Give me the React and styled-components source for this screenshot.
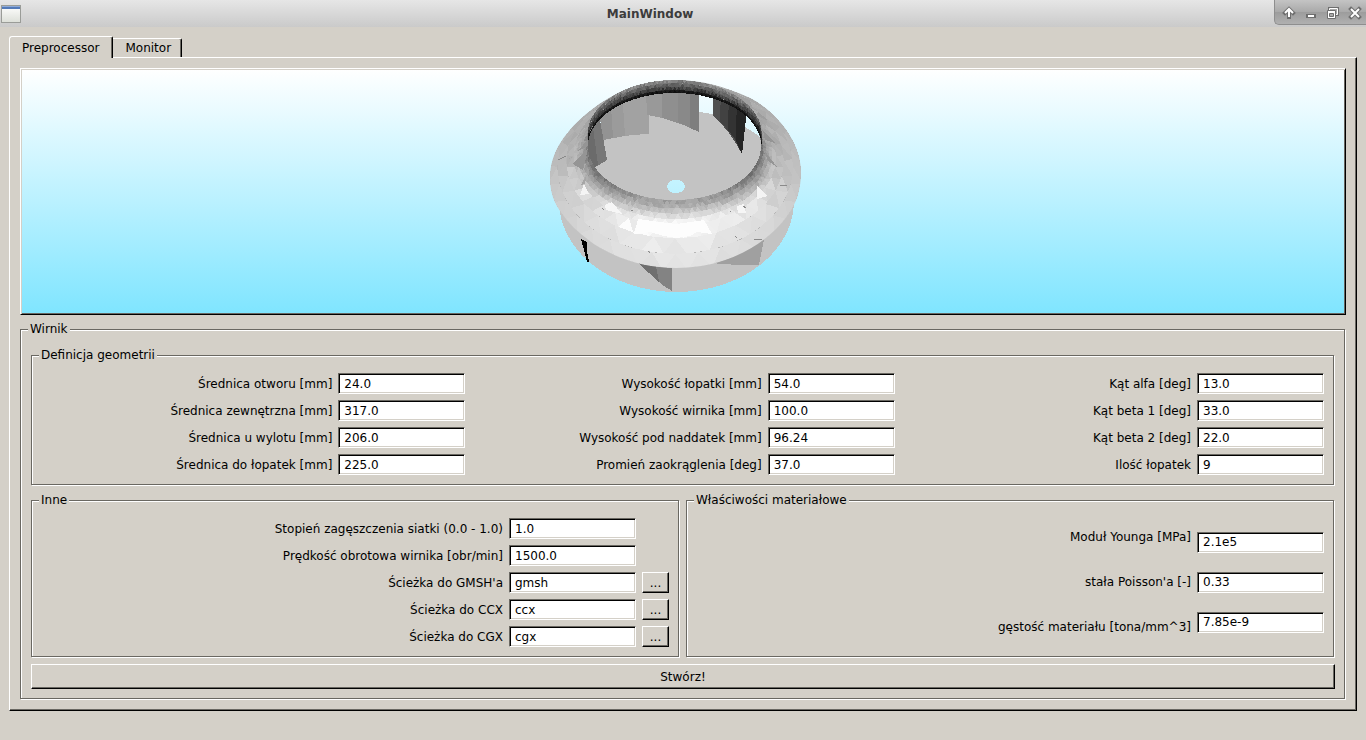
import React, { useState } from "react";
import styled, { createGlobalStyle, css } from "styled-components";

const face = "#d4d0c8";
const shade = "#6a6862";

const geometry = [
  [
    { id: "otwor", label: "Średnica otworu [mm]", value: "24.0" },
    { id: "zewn", label: "Średnica zewnętrzna [mm]", value: "317.0" },
    { id: "wylot", label: "Średnica u wylotu [mm]", value: "206.0" },
    { id: "dolopatek", label: "Średnica do łopatek [mm]", value: "225.0" },
  ],
  [
    { id: "wyslopatki", label: "Wysokość łopatki [mm]", value: "54.0" },
    { id: "wyswirnika", label: "Wysokość wirnika [mm]", value: "100.0" },
    { id: "naddatek", label: "Wysokość pod naddatek [mm]", value: "96.24" },
    { id: "promien", label: "Promień zaokrąglenia [deg]", value: "37.0" },
  ],
  [
    { id: "alfa", label: "Kąt alfa [deg]", value: "13.0" },
    { id: "beta1", label: "Kąt beta 1 [deg]", value: "33.0" },
    { id: "beta2", label: "Kąt beta 2 [deg]", value: "22.0" },
    { id: "ilosc", label: "Ilość łopatek", value: "9" },
  ],
];

const others = [
  { id: "siatka", label: "Stopień zagęszczenia siatki (0.0 - 1.0)", value: "1.0" },
  { id: "predkosc", label: "Prędkość obrotowa wirnika [obr/min]", value: "1500.0" },
  { id: "gmsh", label: "Ścieżka do GMSH'a", value: "gmsh", browse: true },
  { id: "ccx", label: "Ścieżka do CCX", value: "ccx", browse: true },
  { id: "cgx", label: "Ścieżka do CGX", value: "cgx", browse: true },
];

const material = [
  { id: "young", label: "Moduł Younga [MPa]", value: "2.1e5" },
  { id: "poisson", label: "stała Poisson'a [-]", value: "0.33" },
  { id: "gestosc", label: "gęstość materiału [tona/mm^3]", value: "7.85e-9" },
];

// grey level across the shroud, [t, level], from the back round to the front
const profiles = [
  [0, [[0, 150], [1, 165]]],
  [0.25, [[0, 150], [0.3, 168], [1, 182]]],
  [0.5, [[0, 110], [0.06, 135], [0.13, 165], [0.3, 184], [1, 194]]],
  [0.75, [[0, 105], [0.1, 135], [0.2, 168], [0.3, 200], [0.45, 216], [1, 208]]],
  [1, [[0, 155], [0.1, 176], [0.2, 212], [0.32, 243], [0.48, 250], [0.6, 234], [1, 223]]],
];

const lipEdge = [[0, 90], [0.5, 40], [1, 10]];
const lipTop = [[0, 145], [0.3, 105], [0.6, 75], [0.8, 35], [1, 5]];

function along(stops, t) {
  for (let i = 1; i < stops.length; i++) {
    if (t <= stops[i][0]) {
      const [a, va] = stops[i - 1];
      const [b, vb] = stops[i];
      return va + ((vb - va) * (t - a)) / (b - a);
    }
  }
  return stops[stops.length - 1][1];
}

function shroudLevel(angle, t) {
  const front = (1 + Math.sin(angle)) / 2;
  return along(profiles.map(([at, stops]) => [at, along(stops, t)]), front);
}

function shroudPoint(angle, t) {
  const x0 = 674.5 + 86.5 * Math.cos(angle);
  const y0 = 146 + 54 * Math.sin(angle);
  const x1 = 675.5 + 128 * Math.cos(angle);
  const y1 = 174 + 97 * Math.sin(angle);
  return [x0 + (x1 - x0) * t, y0 + (y1 - y0) * t];
}

function lipLevel(angle, t) {
  const back = Math.max(0, -Math.sin(angle));
  return along([[0, along(lipEdge, t)], [0.75, along(lipTop, t)], [1, along(lipTop, t)]], back);
}

function lipPoint(angle, t) {
  return [674.7 + 87 * Math.cos(angle), 134 + 13 * t + 54 * Math.sin(angle)];
}

function buildMesh(bands, from, to, point, level) {
  const facets = [];
  let seed = 11;
  const random = () => {
    seed = (seed * 16807) % 2147483647;
    return seed / 2147483647 - 0.5;
  };
  bands.forEach(([t0, t1, count, noise]) => {
    const step = (to - from) / count;
    for (let i = 0; i < count; i++) {
      const a = from + i * step;
      const corners = [
        [[a, t0], [a + step, t0], [a + step / 2, t1]],
        [[a + step, t0], [a + step / 2, t1], [a + step * 1.5, t1]],
      ];
      corners.forEach((tri) => {
        const angle = tri.reduce((s, p) => s + p[0], 0) / 3;
        const t = tri.reduce((s, p) => s + p[1], 0) / 3;
        const g = Math.max(0, Math.min(255, Math.round(level(angle, t) + random() * noise)));
        facets.push({
          points: tri.map(([r, k]) => point(r, k).map((n) => n.toFixed(1)).join(",")).join(" "),
          fill: `rgb(${g},${g},${g})`,
        });
      });
    }
  });
  return facets;
}

const shroud = buildMesh(
  [
    [0, 0.06, 110, 24],
    [0.06, 0.12, 110, 22],
    [0.12, 0.19, 100, 18],
    [0.19, 0.27, 90, 14],
    [0.27, 0.36, 64, 14],
    [0.36, 0.54, 40, 22],
    [0.54, 0.76, 32, 12],
    [0.76, 1, 32, 5],
  ],
  0,
  Math.PI * 2,
  shroudPoint,
  shroudLevel
);

const lip = buildMesh(
  [
    [0, 0.25, 70, 30],
    [0.25, 0.5, 70, 30],
    [0.5, 0.78, 70, 26],
    [0.78, 1, 60, 8],
  ],
  Math.PI,
  Math.PI * 2,
  lipPoint,
  lipLevel
);

function Mesh({ facets }) {
  return facets.map((facet, i) => <polygon key={i} points={facet.points} fill={facet.fill} />);
}

const outline =
  "M550 178C550 152 566 130 590 111C600 103 607 99 618 93C633 85 655 80 676 80C700 80 724 86 750 98C777 112 801 142 801 172C801 190 796 204 788 215C764 248 722 268 676 268C632 268 588 249 562 214C554 203 550 192 550 178Z";

function Impeller() {
  return (
    <Drawing viewBox="542 70 282 243" shapeRendering="crispEdges" role="img" aria-label="Wirnik">
      <defs>
        <clipPath id="outline">
          <path d={outline} />
        </clipPath>
        <clipPath id="opening">
          <ellipse cx="674.5" cy="146" rx="87" ry="54.5" />
        </clipPath>
      </defs>
      <path
        fill="#c3c3c3"
        fillRule="evenodd"
        d="M559 201A117.500 91 0 0 1 794 201A117.500 91 0 0 1 559 201ZM667 186.500A9 6.500 0 0 0 685 186.500A9 6.500 0 0 0 667 186.500Z"
      />
      <path fill="#000" d="M581 239L587 242L587 251L589 262L587 262L584 250Z" />
      <path fill="#838383" d="M638 263L672 266V291L664 286Z" />
      <path fill="#6f6f6f" d="M638 263L656 266L659 282Z" />
      <path fill="#a0a0a0" d="M710 263L740 250L764 239L759 265L738 265Z" />
      <g clipPath="url(#opening)">
        <path fill="#a2a2a2" d="M596 90H649V134Q622 135 603 140Z" />
        <path fill="#9b9b9b" d="M596 90H622L625 136L603 140Z" />
        <path fill="#939393" d="M596 90H610L613 138L603 140Z" />
        <path fill="#999" d="M646 90H699V132Q675 119 647 115Z" />
        <path fill="#8f8f8f" d="M662 90H699V132L686 126L662 118Z" />
        <path fill="#898989" d="M678 90H699V132L678 122Z" />
        <path fill="#7e7e7e" d="M690 90H699V132L690 128Z" />
        <path fill="#777" d="M585 120H600L607 160L594 168L585 160Z" />
        <path fill="#6b6b6b" d="M585 120H592L598 165L594 168L585 160Z" />
        <path fill="#505050" d="M713 90H746V119L742 154Q730 131 713 115Z" />
        <path fill="#424242" d="M721 90H746V119L742 154L733 136L720 121Z" />
        <path fill="#333" d="M729 90H746V119L742 154L735 139L728 130Z" />
        <path fill="#252525" d="M737 90H746V119L742 154L736 141Z" />
      </g>
      <path
        fill="#b6b6b6"
        fillRule="evenodd"
        d={`${outline}M588 146A86.500 54 0 0 0 761 146A86.500 54 0 0 0 588 146Z`}
      />
      <g clipPath="url(#outline)">
        <Mesh facets={shroud} />
      </g>
      <Mesh facets={lip} />
      <path fill="#959595" d="M573 164L588 148L583 170ZM578 151L588 139L588 146ZM763 130L775 143L765 140ZM764 150L777 167L768 161Z" />
      <path fill="#a6a6a6" d="M560 163L575 156L568 159ZM581 185L587 174L585 184Z" />
      <path fill="#f4f4f4" d="M584 184L589 194L580 195ZM757 186L768 196L757 199Z" />
      <path fill="#f6f6f6" d="M605 205L612 202L622 214L606 210ZM737 206L744 204L746 213L738 213Z" />
      <path fill="#fdfdfd" d="M634 234L638 219L652 221L676 224L704 220L712 234L697 232L690 236L676 238L664 236L650 232Z" />
      <path stroke="#8a8a8a" fill="none" d="M754 239H762M743 206L746 208M730 211L731 212M602 208L604 210M648 251L650 253M735 236L737 238M631 210H633M780 185H787M558 160L566 156" />
    </Drawing>
  );
}

function Glyph({ d }) {
  return (
    <svg width="22" height="24" viewBox="0 0 22 24" aria-hidden="true">
      <path d={d} fill="none" stroke="#6e6e6e" strokeWidth="4" strokeLinecap="square" />
      <path d={d} fill="none" stroke="#fff" strokeWidth="2" />
    </svg>
  );
}

function TitleBar() {
  return (
    <Bar>
      <svg width="20" height="18" viewBox="0 0 20 18" aria-hidden="true">
        <defs>
          <linearGradient id="sheet" x1="0" y1="0" x2="0" y2="1">
            <stop offset="0" stopColor="#fff" />
            <stop offset="1" stopColor="#dcdfd8" />
          </linearGradient>
        </defs>
        <rect x="0.5" y="0.5" width="19" height="17" fill="url(#sheet)" stroke="#9a9c98" />
        <path d="M1 1.500H19" stroke="#8eaad8" />
        <path d="M1 3H19" stroke="#5279b8" strokeWidth="2" />
      </svg>
      <Title>MainWindow</Title>
      <Controls>
        <Control aria-label="Shade">
          <Glyph d="M11 17V10M7 13L11 9L15 13" />
        </Control>
        <Control aria-label="Minimize">
          <Glyph d="M8 16H14" />
        </Control>
        <Control aria-label="Restore">
          <svg width="22" height="24" viewBox="0 0 22 24" aria-hidden="true">
            <path d="M7.500 8.500H15.500V14.500H7.500Z" fill="none" stroke="#6e6e6e" strokeWidth="3" />
            <path d="M7.500 8.500H15.500V14.500H7.500Z" fill="#aaa" stroke="#fff" />
            <path d="M5.500 10.500H13.500V18.500H5.500Z" fill="#fff" stroke="#6e6e6e" />
            <path d="M7.500 13.500H11.500V16.500H7.500Z" fill="#aaa" stroke="#6e6e6e" />
          </svg>
        </Control>
        <Control aria-label="Close">
          <Glyph d="M7 9L15 17M15 9L7 17" />
        </Control>
      </Controls>
    </Bar>
  );
}

function Field({ field }) {
  return (
    <>
      <Label htmlFor={field.id}>{field.label}</Label>
      <Input id={field.id} defaultValue={field.value} />
    </>
  );
}

function App() {
  const [tab, setTab] = useState("Preprocessor");

  return (
    <Window>
      <GlobalStyle />
      <TitleBar />
      <Body>
        <Tabs role="tablist">
          {["Preprocessor", "Monitor"].map((name) => (
            <Tab key={name} role="tab" aria-selected={tab === name} $active={tab === name} onClick={() => setTab(name)}>
              {name}
            </Tab>
          ))}
        </Tabs>
        <Pane role="tabpanel">
          <Viewport>
            <Impeller />
          </Viewport>
          <Group>
            <Legend>Wirnik</Legend>
            <Stack>
              <Group>
                <Legend>Definicja geometrii</Legend>
                <Columns>
                  {geometry.map((column) => (
                    <Form key={column[0].id}>
                      {column.map((field) => (
                        <Field key={field.id} field={field} />
                      ))}
                    </Form>
                  ))}
                </Columns>
              </Group>
              <Halves>
                <Group>
                  <Legend>Inne</Legend>
                  <Form $browse>
                    {others.map((field) => (
                      <React.Fragment key={field.id}>
                        <Field field={field} />
                        {field.browse ? <Button aria-label={`${field.label} ...`}>...</Button> : <span />}
                      </React.Fragment>
                    ))}
                  </Form>
                </Group>
                <Group>
                  <Legend>Właściwości materiałowe</Legend>
                  <Material>
                    <Side $gap={29}>
                      {material.map((field) => (
                        <Label key={field.id} htmlFor={field.id}>
                          {field.label}
                        </Label>
                      ))}
                    </Side>
                    <Side $gap={19}>
                      {material.map((field) => (
                        <Input key={field.id} id={field.id} defaultValue={field.value} />
                      ))}
                    </Side>
                  </Material>
                </Group>
              </Halves>
              <Button $wide>Stwórz!</Button>
            </Stack>
          </Group>
        </Pane>
      </Body>
    </Window>
  );
}

const GlobalStyle = createGlobalStyle`
  * {
    box-sizing: border-box;
  }
  body {
    margin: 0;
    background: ${face};
  }
  body, button, input {
    font-family: "DejaVu Sans", sans-serif;
    font-size: 12px;
    line-height: 16px;
    color: #000;
  }
`;

const raised = css`
  background: ${face};
  border: 1px solid;
  border-color: #fff #000 #000 #fff;
  box-shadow: inset -1px -1px 0 ${shade};
`;

const Window = styled.div`
  min-height: 100vh;
  background: ${face};
`;

const Bar = styled.header`
  display: flex;
  align-items: center;
  height: 27px;
  padding-left: 1px;
  background: linear-gradient(#e6e6e6, #cacaca);
`;

const Title = styled.h1`
  flex: 1;
  margin: 0;
  padding-left: 5px;
  font-size: 12px;
  line-height: 16px;
  font-weight: bold;
  text-align: center;
  color: #3c3c3c;
`;

const Controls = styled.div`
  display: flex;
  align-self: flex-start;
  height: 25px;
  padding-left: 3px;
  background: linear-gradient(#c4c4c4, #a9a9a9 50%, #9c9c9c 50%, #b0b0b0);
  border-left: 1px solid #8e8e8e;
  border-bottom: 1px solid #8e8e8e;
  border-bottom-left-radius: 5px;
`;

const Control = styled.button`
  display: flex;
  width: 22px;
  height: 24px;
  padding: 0;
  border: 0;
  background: none;
`;

const Body = styled.main`
  padding: 9px 9px 29px;
`;

const Tabs = styled.div`
  display: flex;
  align-items: flex-end;
  height: 21px;
`;

const Tab = styled.button`
  ${raised}
  height: 19px;
  padding: 0 10px 0 12px;
  border-bottom: 0;
  border-left: 0;
  border-radius: 0 2px 0 0;
  box-shadow: inset -1px 0 0 ${shade};

  ${(props) =>
    props.$active &&
    css`
      position: relative;
      height: 22px;
      margin-bottom: -1px;
      padding: 0 13px 0 12px;
      border-left: 1px solid #fff;
      border-radius: 3px 2px 0 0;
    `}
`;

const Pane = styled.section`
  ${raised}
  padding: 10px;
`;

const Viewport = styled.div`
  ${raised}
  display: flex;
  justify-content: center;
  margin-bottom: 6px;
  padding: 1px;
  background: linear-gradient(#fff, #7fe5ff);
  box-shadow: inset 1px 1px 0 ${face}, inset -1px -1px 0 ${shade};
`;

const Drawing = styled.svg`
  display: block;
  height: 243px;
`;

const Group = styled.fieldset`
  min-width: 0;
  margin: 0 1px 1px 0;
  padding: 10px 9px 9px 10px;
  border: 1px solid ${shade};
  box-shadow: 1px 1px 0 #fff, inset 1px 1px 0 #fff;
`;

const Legend = styled.legend`
  margin-left: -3px;
  padding: 0 2px;
  background: ${face};
`;

const Stack = styled.div`
  display: flex;
  flex-direction: column;
  gap: 6px;
`;

const Columns = styled.div`
  display: grid;
  grid-template-columns: repeat(3, 1fr);
  gap: 6px;
`;

const Halves = styled.div`
  display: grid;
  grid-template-columns: repeat(2, 1fr);
  gap: 6px;
`;

const Form = styled.div`
  display: grid;
  grid-template-columns: 1fr 127px ${(props) => (props.$browse ? "27px" : "")};
  align-items: center;
  gap: 6px;
`;

const Label = styled.label`
  text-align: right;
  white-space: nowrap;
`;

const Input = styled.input`
  width: 127px;
  height: 21px;
  padding: 0 5px;
  background: #fff;
  border: 1px solid;
  border-color: ${shade} #fff #fff ${shade};
  border-radius: 0;
  box-shadow: inset 1px 1px 0 #000, inset -1px -1px 0 ${face};
  outline: none;
`;

const Material = styled.div`
  display: flex;
  justify-content: flex-end;
  gap: 6px;
  height: 100%;
  padding-bottom: 1px;
`;

const Side = styled.div`
  display: flex;
  flex-direction: column;
  justify-content: center;
  gap: ${(props) => props.$gap}px;
`;

const Button = styled.button`
  ${raised}
  height: ${(props) => (props.$wide ? "25px" : "21px")};
  padding: 0;
`;

export default App;
